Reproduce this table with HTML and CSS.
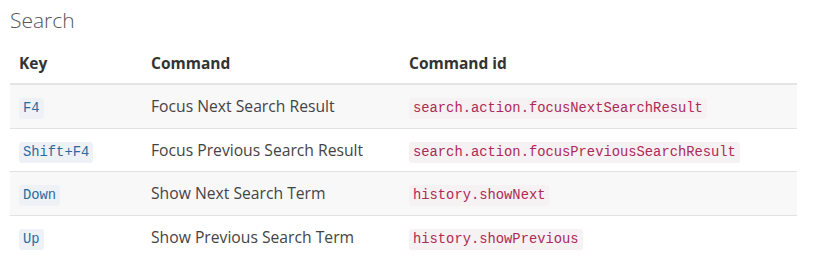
FILE: index.html
```html
<!DOCTYPE html>
<html>
<head>
<meta charset="utf-8">
<link rel="stylesheet" href="styles.css">
</head>
<body>
<h3 class="title">Search</h3>
<table class="kb">
  <thead>
    <tr><th class="c-key">Key</th><th class="c-cmd">Command</th><th>Command id</th></tr>
  </thead>
  <tbody>
    <tr><td><code class="key">F4</code></td><td>Focus Next Search Result</td><td><code class="cid">search.action.focusNextSearchResult</code></td></tr>
    <tr><td><code class="key">Shift+F4</code></td><td>Focus Previous Search Result</td><td><code class="cid">search.action.focusPreviousSearchResult</code></td></tr>
    <tr><td><code class="key">Down</code></td><td>Show Next Search Term</td><td><code class="cid">history.showNext</code></td></tr>
    <tr><td><code class="key">Up</code></td><td>Show Previous Search Term</td><td><code class="cid">history.showPrevious</code></td></tr>
  </tbody>
</table>
</body>
</html>
```
FILE: styles.css
```css
html, body { margin: 0; padding: 0; background: #fff; }
body {
  font-family: "Open Sans", "Noto Sans", sans-serif;
  color: #444;
  padding: 0 30px 0 10px;
}
.title {
  margin: 0;
  padding-top: 6px;
  height: 36px;
  font-size: 21px;
  font-weight: 300;
  color: #555;
  line-height: 28px;
}
.kb {
  width: 787px;
  border-collapse: collapse;
  font-size: 15.7px;
}
.kb th {
  text-align: left;
  font-weight: 700;
  color: #333;
  padding: 0 9px;
  height: 41px;
  font-size: 15.5px;
  border-bottom: 2px solid #e4e4e4;
}
.c-key { width: 114px; }
.c-cmd { width: 240px; }
.kb td {
  padding: 0 9px;
  height: 42.6px;
  border-bottom: 1px solid #e2e2e2;
  color: #444;
}
.kb tbody tr:nth-child(odd) td { background: #f8f8f8; }
.kb tbody tr:last-child td { border-bottom: none; }
code {
  font-family: "Liberation Mono", "DejaVu Sans Mono", monospace;
  font-size: 13.8px;
  padding: 3px 4px;
  border-radius: 3px;
}
.key { color: #2a6aa0; background: #eef2f6; }
.cid { color: #ad2a57; background: #f6f1f2; }
```
